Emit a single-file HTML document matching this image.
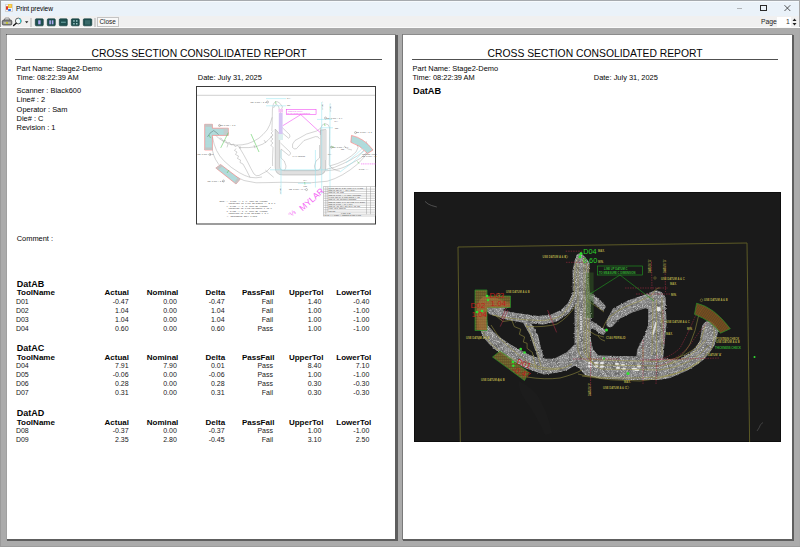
<!DOCTYPE html>
<html><head><meta charset="utf-8">
<style>
*{margin:0;padding:0;box-sizing:border-box}
html,body{width:800px;height:547px;overflow:hidden;background:#ababab;font-family:"Liberation Sans",sans-serif;position:relative}
.a{position:absolute;white-space:pre;line-height:1}
.t{position:absolute;white-space:pre;line-height:1}
svg.a{line-height:0}
</style></head><body>
<div class="a" style="left:0;top:0;width:800px;height:16px;background:#eaf2f9;border-top:1px solid #a6aaae"></div>
<div class="a" style="left:1px;top:1px;width:798px;height:1px;background:#f6fafd"></div>
<div class="a" style="left:0;top:16px;width:800px;height:12px;background:#f0f0f0"></div>
<div class="a" style="left:0;top:0;width:1px;height:547px;background:#9a9a9a"></div>
<div class="a" style="left:799px;top:0;width:1px;height:547px;background:#a8a8a8"></div>
<!-- title bar content -->
<div class="a" style="left:5px;top:4px;width:7.5px;height:7.5px;background:#f6f6f6;border:0.6px solid #d4d4d4"></div>
<div class="a" style="left:5.8px;top:6.2px;width:2.2px;height:3.6px;background:#d83828;border-radius:1px"></div>
<div class="a" style="left:8px;top:4.4px;width:3.9px;height:4.1px;background:radial-gradient(circle at 50% 45%,#ffe080,#e8a800);border-radius:0.8px"></div>
<div class="a" style="left:8.2px;top:9px;width:3px;height:1.8px;background:#3070e0;border-radius:0.8px"></div>
<div class="a" style="left:16px;top:6.1px;font-size:6.6px;color:#000;letter-spacing:-0.1px">Print preview</div>
<div class="a" style="left:736.5px;top:8px;width:5.5px;height:0.8px;background:#b0b4b8"></div>
<div class="a" style="left:760px;top:5px;width:6.5px;height:6px;border:0.8px solid #2a2a2a"></div>
<svg class="a" style="left:783px;top:4px" width="9" height="9" viewBox="0 0 9 9"><path d="M1.5 1.2L7.3 7M7.3 1.2L1.5 7" stroke="#222" stroke-width="0.75"/></svg>
<!-- toolbar -->
<div class="a" style="left:0;top:27px;width:800px;height:1px;background:#fbfbfb"></div>
<svg class="a" style="left:1px;top:17px" width="30" height="10" viewBox="0 0 30 10">
 <path d="M3.2 3.2 L4.2 1 H8 L9 3.2 Z" fill="#f4f4f4" stroke="#555" stroke-width="0.6"/>
 <path d="M1.3 4.2 Q1.5 3 3 3 H9.2 Q10.7 3 10.8 4.2 L10.8 7 Q10.7 8 9.5 8 H2.5 Q1.3 8 1.3 7 Z" fill="#8a8a8a" stroke="#3a3a3a" stroke-width="0.7"/>
 <rect x="2.6" y="5.4" width="7" height="1.1" fill="#d8d8c0"/>
 <rect x="5" y="5.3" width="2" height="1.3" fill="#c8c800"/>
 <circle cx="17.3" cy="4" r="2.9" fill="#f4fafa" stroke="#3a3a3a" stroke-width="0.8"/>
 <path d="M18.4 1.8 A2.4 2.4 0 0 1 19 5.6" stroke="#30d0d8" stroke-width="1.1" fill="none"/>
 <path d="M15.2 6.2 L12.6 8.6" stroke="#111" stroke-width="1.3" stroke-linecap="round"/>
 <path d="M24 4.3 h3.4 l-1.7 1.9 z" fill="#222"/>
</svg>
<div class="a" style="left:30px;top:18px;width:1.5px;height:9px;background:#cfcfcf"></div>
<div class="a" style="left:94px;top:18px;width:1.5px;height:9px;background:#cfcfcf"></div>
<svg class="a" style="left:34px;top:18px" width="60" height="9" viewBox="0 0 60 9">
 <g fill="#1f5050" stroke="#0d3535" stroke-width="0.6">
  <rect x="1.3" y="0.8" width="8" height="7" rx="1"/>
  <rect x="13.3" y="0.8" width="8" height="7" rx="1"/>
  <rect x="25.3" y="0.8" width="8" height="7" rx="1"/>
  <rect x="37.3" y="0.8" width="8" height="7" rx="1"/>
  <rect x="49.3" y="0.8" width="8.5" height="7" rx="1"/>
 </g>
 <rect x="4.2" y="2.3" width="2.4" height="4" fill="#b0a8f0"/>
 <rect x="15.3" y="2.3" width="1.6" height="4" fill="#b0a8f0"/>
 <rect x="17.8" y="2.3" width="1.6" height="4" fill="#b0a8f0"/>
 <rect x="27" y="3.6" width="4.8" height="1.4" fill="#5a9090"/>
 <rect x="39.2" y="2.2" width="1.5" height="1.5" fill="#a0c8c8"/><rect x="42" y="2.2" width="1.5" height="1.5" fill="#a0c8c8"/>
 <rect x="39.2" y="5" width="1.5" height="1.5" fill="#a0c8c8"/><rect x="42" y="5" width="1.5" height="1.5" fill="#a0c8c8"/>
 <rect x="51" y="2.2" width="5" height="4.4" fill="#3a6a6a"/>
</svg>
<div class="a" style="left:97px;top:17px;width:22px;height:10px;border:1px solid #c4c4c4;background:#f8f8f8"></div>
<div class="a" style="left:99.5px;top:19.3px;font-size:6.4px;color:#1a1a1a">Close</div>
<div class="a" style="left:761px;top:19px;font-size:6.8px;color:#222">Page</div>
<div class="a" style="left:777px;top:17px;width:14px;height:10px;background:#fff"></div>
<div class="a" style="left:786px;top:19px;font-size:6.8px;color:#333">1</div>
<svg class="a" style="left:791px;top:17px" width="7" height="10" viewBox="0 0 7 10"><path d="M1.5 4h4L3.5 1.5z M1.5 6h4L3.5 8.5z" fill="#222"/></svg>


<div class="a" style="left:6px;top:34px;width:390px;height:1px;background:#8c8c8c"></div>
<div class="a" style="left:6px;top:34px;width:1px;height:506px;background:#a0a0a0"></div>
<div class="a" style="left:6px;top:34px;width:1px;height:1px;background:#5a5a5a"></div>
<div class="a" style="left:395px;top:35px;width:3px;height:506px;background:#5e5e5e"></div>
<div class="a" style="left:7px;top:539px;width:391px;height:2px;background:#5e5e5e"></div>
<div class="a" style="left:7px;top:35px;width:388px;height:504px;background:#fff"></div>
<div class="a" style="left:402px;top:34px;width:391px;height:1px;background:#8c8c8c"></div>
<div class="a" style="left:402px;top:34px;width:1px;height:506px;background:#7a7a7a"></div>
<div class="a" style="left:0;top:546px;width:800px;height:1px;background:#9c9c9c"></div>
<div class="a" style="left:792px;top:35px;width:2px;height:506px;background:#5e5e5e"></div>
<div class="a" style="left:403px;top:539px;width:391px;height:2px;background:#5e5e5e"></div>
<div class="a" style="left:403px;top:35px;width:389px;height:504px;background:#fff"></div>
<div class="t" style="left:91.50px;top:49.24px;font-size:10.35px;color:#050505;">CROSS SECTION CONSOLIDATED REPORT</div>
<div class="a" style="left:15px;top:59px;width:367px;height:1px;background:#505050"></div>
<div class="t" style="left:16.60px;top:64.69px;font-size:7.45px;color:#050505;">Part Name: Stage2-Demo</div>
<div class="t" style="left:16.60px;top:73.59px;font-size:7.45px;color:#050505;">Time: 08:22:39 AM</div>
<div class="t" style="left:197.80px;top:73.89px;font-size:7.45px;color:#050505;">Date: July 31, 2025</div>
<div class="t" style="left:16.60px;top:87.29px;font-size:7.45px;color:#050505;">Scanner : Black600</div>
<div class="t" style="left:16.60px;top:96.44px;font-size:7.45px;color:#050505;">Line# : 2</div>
<div class="t" style="left:16.60px;top:105.59px;font-size:7.45px;color:#050505;">Operator : Sam</div>
<div class="t" style="left:16.60px;top:114.74px;font-size:7.45px;color:#050505;">Die# : C</div>
<div class="t" style="left:16.60px;top:123.89px;font-size:7.45px;color:#050505;">Revision : 1</div>
<div class="t" style="left:16.70px;top:234.59px;font-size:7.45px;color:#050505;">Comment :</div>
<div class="t" style="left:16.70px;top:279.58px;font-size:9.0px;font-weight:bold;color:#050505;">DatAB</div>
<div class="t" style="left:16.70px;top:289.39px;font-size:8.05px;font-weight:bold;color:#050505;">ToolName</div>
<div class="t" style="left:-71.00px;width:200px;text-align:right;top:289.43px;font-size:8.0px;font-weight:bold;color:#050505;">Actual</div>
<div class="t" style="left:-21.70px;width:200px;text-align:right;top:289.43px;font-size:8.0px;font-weight:bold;color:#050505;">Nominal</div>
<div class="t" style="left:25.10px;width:200px;text-align:right;top:289.43px;font-size:8.0px;font-weight:bold;color:#050505;">Delta</div>
<div class="t" style="left:74.40px;width:200px;text-align:right;top:289.43px;font-size:8.0px;font-weight:bold;color:#050505;">PassFail</div>
<div class="t" style="left:123.40px;width:200px;text-align:right;top:289.43px;font-size:8.0px;font-weight:bold;color:#050505;">UpperTol</div>
<div class="t" style="left:171.30px;width:200px;text-align:right;top:289.43px;font-size:8.0px;font-weight:bold;color:#050505;">LowerTol</div>
<div class="t" style="left:15.90px;top:298.07px;font-size:7.0px;color:#181818;">D01</div>
<div class="t" style="left:-71.40px;width:200px;text-align:right;top:298.07px;font-size:7.0px;color:#181818;">-0.47</div>
<div class="t" style="left:-23.20px;width:200px;text-align:right;top:298.07px;font-size:7.0px;color:#181818;">0.00</div>
<div class="t" style="left:24.60px;width:200px;text-align:right;top:298.07px;font-size:7.0px;color:#181818;">-0.47</div>
<div class="t" style="left:73.00px;width:200px;text-align:right;top:298.07px;font-size:7.0px;color:#181818;">Fail</div>
<div class="t" style="left:121.30px;width:200px;text-align:right;top:298.07px;font-size:7.0px;color:#181818;">1.40</div>
<div class="t" style="left:169.30px;width:200px;text-align:right;top:298.07px;font-size:7.0px;color:#181818;">-0.40</div>
<div class="t" style="left:15.90px;top:307.02px;font-size:7.0px;color:#181818;">D02</div>
<div class="t" style="left:-71.40px;width:200px;text-align:right;top:307.02px;font-size:7.0px;color:#181818;">1.04</div>
<div class="t" style="left:-23.20px;width:200px;text-align:right;top:307.02px;font-size:7.0px;color:#181818;">0.00</div>
<div class="t" style="left:24.60px;width:200px;text-align:right;top:307.02px;font-size:7.0px;color:#181818;">1.04</div>
<div class="t" style="left:73.00px;width:200px;text-align:right;top:307.02px;font-size:7.0px;color:#181818;">Fail</div>
<div class="t" style="left:121.30px;width:200px;text-align:right;top:307.02px;font-size:7.0px;color:#181818;">1.00</div>
<div class="t" style="left:169.30px;width:200px;text-align:right;top:307.02px;font-size:7.0px;color:#181818;">-1.00</div>
<div class="t" style="left:15.90px;top:315.97px;font-size:7.0px;color:#181818;">D03</div>
<div class="t" style="left:-71.40px;width:200px;text-align:right;top:315.97px;font-size:7.0px;color:#181818;">1.04</div>
<div class="t" style="left:-23.20px;width:200px;text-align:right;top:315.97px;font-size:7.0px;color:#181818;">0.00</div>
<div class="t" style="left:24.60px;width:200px;text-align:right;top:315.97px;font-size:7.0px;color:#181818;">1.04</div>
<div class="t" style="left:73.00px;width:200px;text-align:right;top:315.97px;font-size:7.0px;color:#181818;">Fail</div>
<div class="t" style="left:121.30px;width:200px;text-align:right;top:315.97px;font-size:7.0px;color:#181818;">1.00</div>
<div class="t" style="left:169.30px;width:200px;text-align:right;top:315.97px;font-size:7.0px;color:#181818;">-1.00</div>
<div class="t" style="left:15.90px;top:324.92px;font-size:7.0px;color:#181818;">D04</div>
<div class="t" style="left:-71.40px;width:200px;text-align:right;top:324.92px;font-size:7.0px;color:#181818;">0.60</div>
<div class="t" style="left:-23.20px;width:200px;text-align:right;top:324.92px;font-size:7.0px;color:#181818;">0.00</div>
<div class="t" style="left:24.60px;width:200px;text-align:right;top:324.92px;font-size:7.0px;color:#181818;">0.60</div>
<div class="t" style="left:73.00px;width:200px;text-align:right;top:324.92px;font-size:7.0px;color:#181818;">Pass</div>
<div class="t" style="left:121.30px;width:200px;text-align:right;top:324.92px;font-size:7.0px;color:#181818;">1.00</div>
<div class="t" style="left:169.30px;width:200px;text-align:right;top:324.92px;font-size:7.0px;color:#181818;">-1.00</div>
<div class="t" style="left:16.70px;top:343.78px;font-size:9.0px;font-weight:bold;color:#050505;">DatAC</div>
<div class="t" style="left:16.70px;top:353.59px;font-size:8.05px;font-weight:bold;color:#050505;">ToolName</div>
<div class="t" style="left:-71.00px;width:200px;text-align:right;top:353.63px;font-size:8.0px;font-weight:bold;color:#050505;">Actual</div>
<div class="t" style="left:-21.70px;width:200px;text-align:right;top:353.63px;font-size:8.0px;font-weight:bold;color:#050505;">Nominal</div>
<div class="t" style="left:25.10px;width:200px;text-align:right;top:353.63px;font-size:8.0px;font-weight:bold;color:#050505;">Delta</div>
<div class="t" style="left:74.40px;width:200px;text-align:right;top:353.63px;font-size:8.0px;font-weight:bold;color:#050505;">PassFail</div>
<div class="t" style="left:123.40px;width:200px;text-align:right;top:353.63px;font-size:8.0px;font-weight:bold;color:#050505;">UpperTol</div>
<div class="t" style="left:171.30px;width:200px;text-align:right;top:353.63px;font-size:8.0px;font-weight:bold;color:#050505;">LowerTol</div>
<div class="t" style="left:15.90px;top:362.27px;font-size:7.0px;color:#181818;">D04</div>
<div class="t" style="left:-71.40px;width:200px;text-align:right;top:362.27px;font-size:7.0px;color:#181818;">7.91</div>
<div class="t" style="left:-23.20px;width:200px;text-align:right;top:362.27px;font-size:7.0px;color:#181818;">7.90</div>
<div class="t" style="left:24.60px;width:200px;text-align:right;top:362.27px;font-size:7.0px;color:#181818;">0.01</div>
<div class="t" style="left:73.00px;width:200px;text-align:right;top:362.27px;font-size:7.0px;color:#181818;">Pass</div>
<div class="t" style="left:121.30px;width:200px;text-align:right;top:362.27px;font-size:7.0px;color:#181818;">8.40</div>
<div class="t" style="left:169.30px;width:200px;text-align:right;top:362.27px;font-size:7.0px;color:#181818;">7.10</div>
<div class="t" style="left:15.90px;top:371.22px;font-size:7.0px;color:#181818;">D05</div>
<div class="t" style="left:-71.40px;width:200px;text-align:right;top:371.22px;font-size:7.0px;color:#181818;">-0.06</div>
<div class="t" style="left:-23.20px;width:200px;text-align:right;top:371.22px;font-size:7.0px;color:#181818;">0.00</div>
<div class="t" style="left:24.60px;width:200px;text-align:right;top:371.22px;font-size:7.0px;color:#181818;">-0.06</div>
<div class="t" style="left:73.00px;width:200px;text-align:right;top:371.22px;font-size:7.0px;color:#181818;">Pass</div>
<div class="t" style="left:121.30px;width:200px;text-align:right;top:371.22px;font-size:7.0px;color:#181818;">1.00</div>
<div class="t" style="left:169.30px;width:200px;text-align:right;top:371.22px;font-size:7.0px;color:#181818;">-1.00</div>
<div class="t" style="left:15.90px;top:380.17px;font-size:7.0px;color:#181818;">D06</div>
<div class="t" style="left:-71.40px;width:200px;text-align:right;top:380.17px;font-size:7.0px;color:#181818;">0.28</div>
<div class="t" style="left:-23.20px;width:200px;text-align:right;top:380.17px;font-size:7.0px;color:#181818;">0.00</div>
<div class="t" style="left:24.60px;width:200px;text-align:right;top:380.17px;font-size:7.0px;color:#181818;">0.28</div>
<div class="t" style="left:73.00px;width:200px;text-align:right;top:380.17px;font-size:7.0px;color:#181818;">Pass</div>
<div class="t" style="left:121.30px;width:200px;text-align:right;top:380.17px;font-size:7.0px;color:#181818;">0.30</div>
<div class="t" style="left:169.30px;width:200px;text-align:right;top:380.17px;font-size:7.0px;color:#181818;">-0.30</div>
<div class="t" style="left:15.90px;top:389.12px;font-size:7.0px;color:#181818;">D07</div>
<div class="t" style="left:-71.40px;width:200px;text-align:right;top:389.12px;font-size:7.0px;color:#181818;">0.31</div>
<div class="t" style="left:-23.20px;width:200px;text-align:right;top:389.12px;font-size:7.0px;color:#181818;">0.00</div>
<div class="t" style="left:24.60px;width:200px;text-align:right;top:389.12px;font-size:7.0px;color:#181818;">0.31</div>
<div class="t" style="left:73.00px;width:200px;text-align:right;top:389.12px;font-size:7.0px;color:#181818;">Fail</div>
<div class="t" style="left:121.30px;width:200px;text-align:right;top:389.12px;font-size:7.0px;color:#181818;">0.30</div>
<div class="t" style="left:169.30px;width:200px;text-align:right;top:389.12px;font-size:7.0px;color:#181818;">-0.30</div>
<div class="t" style="left:16.70px;top:408.98px;font-size:9.0px;font-weight:bold;color:#050505;">DatAD</div>
<div class="t" style="left:16.70px;top:418.79px;font-size:8.05px;font-weight:bold;color:#050505;">ToolName</div>
<div class="t" style="left:-71.00px;width:200px;text-align:right;top:418.83px;font-size:8.0px;font-weight:bold;color:#050505;">Actual</div>
<div class="t" style="left:-21.70px;width:200px;text-align:right;top:418.83px;font-size:8.0px;font-weight:bold;color:#050505;">Nominal</div>
<div class="t" style="left:25.10px;width:200px;text-align:right;top:418.83px;font-size:8.0px;font-weight:bold;color:#050505;">Delta</div>
<div class="t" style="left:74.40px;width:200px;text-align:right;top:418.83px;font-size:8.0px;font-weight:bold;color:#050505;">PassFail</div>
<div class="t" style="left:123.40px;width:200px;text-align:right;top:418.83px;font-size:8.0px;font-weight:bold;color:#050505;">UpperTol</div>
<div class="t" style="left:171.30px;width:200px;text-align:right;top:418.83px;font-size:8.0px;font-weight:bold;color:#050505;">LowerTol</div>
<div class="t" style="left:15.90px;top:427.47px;font-size:7.0px;color:#181818;">D08</div>
<div class="t" style="left:-71.40px;width:200px;text-align:right;top:427.47px;font-size:7.0px;color:#181818;">-0.37</div>
<div class="t" style="left:-23.20px;width:200px;text-align:right;top:427.47px;font-size:7.0px;color:#181818;">0.00</div>
<div class="t" style="left:24.60px;width:200px;text-align:right;top:427.47px;font-size:7.0px;color:#181818;">-0.37</div>
<div class="t" style="left:73.00px;width:200px;text-align:right;top:427.47px;font-size:7.0px;color:#181818;">Pass</div>
<div class="t" style="left:121.30px;width:200px;text-align:right;top:427.47px;font-size:7.0px;color:#181818;">1.00</div>
<div class="t" style="left:169.30px;width:200px;text-align:right;top:427.47px;font-size:7.0px;color:#181818;">-1.00</div>
<div class="t" style="left:15.90px;top:436.42px;font-size:7.0px;color:#181818;">D09</div>
<div class="t" style="left:-71.40px;width:200px;text-align:right;top:436.42px;font-size:7.0px;color:#181818;">2.35</div>
<div class="t" style="left:-23.20px;width:200px;text-align:right;top:436.42px;font-size:7.0px;color:#181818;">2.80</div>
<div class="t" style="left:24.60px;width:200px;text-align:right;top:436.42px;font-size:7.0px;color:#181818;">-0.45</div>
<div class="t" style="left:73.00px;width:200px;text-align:right;top:436.42px;font-size:7.0px;color:#181818;">Fail</div>
<div class="t" style="left:121.30px;width:200px;text-align:right;top:436.42px;font-size:7.0px;color:#181818;">3.10</div>
<div class="t" style="left:169.30px;width:200px;text-align:right;top:436.42px;font-size:7.0px;color:#181818;">2.50</div>

<div class="t" style="left:487.50px;top:49.24px;font-size:10.35px;color:#050505;">CROSS SECTION CONSOLIDATED REPORT</div>
<div class="a" style="left:412px;top:59px;width:366px;height:1px;background:#505050"></div>
<div class="t" style="left:412.60px;top:64.69px;font-size:7.45px;color:#050505;">Part Name: Stage2-Demo</div>
<div class="t" style="left:412.60px;top:73.59px;font-size:7.45px;color:#050505;">Time: 08:22:39 AM</div>
<div class="t" style="left:593.80px;top:73.89px;font-size:7.45px;color:#050505;">Date: July 31, 2025</div>
<div class="t" style="left:413.00px;top:87.41px;font-size:9.2px;font-weight:bold;color:#050505;">DatAB</div>

<svg class="a" style="left:196px;top:85px" width="181" height="141" viewBox="196 85 181 141">
<defs>
<pattern id="hatT" width="1.5" height="1.5" patternUnits="userSpaceOnUse">
 <rect width="1.5" height="1.5" fill="#9ed0d0"/>
 <path d="M0 0.75H1.5" stroke="#d8f0f0" stroke-width="0.5"/>
</pattern>
</defs>
<rect x="196.5" y="86.5" width="179" height="137.5" fill="#fff" stroke="#3a3a3a" stroke-width="1"/>
<path d="M197 95.3 H375" stroke="#c4c4c4" stroke-width="0.8"/>
<!-- U channel gray fill -->
<path d="M275.2 129 L275.2 167 Q275.2 175 283 175 L318 175 Q325.8 175 325.8 167 L325.8 129.6 L320.7 130 L320.7 166 Q320.7 170.6 316 170.6 L284 170.6 Q279.7 170.6 279.7 166 L279.7 134 Z" fill="#e0e0e0" stroke="#9a9a9a" stroke-width="0.45"/>
<path d="M324 130 L326.5 130 L326.5 160 L324 160 Z" fill="#e0e0e0"/>
<g fill="none" stroke="#989898" stroke-width="0.42">
 <!-- stem outer & tip -->
 <path d="M271.8 131 L272.1 125.7 L272.4 110 Q272.8 103 275.5 101.6 Q279 101 282.5 106.9 L280.5 111.5 L280 125.7"/>
 <path d="M273.5 108 Q275 104 277 104.5 Q279 106 279.5 110"/>
 <!-- fingers -->
 <path d="M280 125.5 L289.5 134.5 Q291 137.5 288.5 138.2 L280 131"/>
 <path d="M280.5 143 L290 152 Q291.5 155 288.5 155.2 L281 149"/>
 <!-- hook arm + post -->
 <path d="M320.3 135 L320.7 128 L317 130.9 L306.6 134 L295 140.5 Q291.5 144 292.5 147.5 Q294 149.5 296.3 148.8 L304 140.5 L315.5 136.6 Q318.5 136 319.6 138.9"/>
 <path d="M320.7 128 Q322 123.8 325.1 123.6 Q329 124 329.6 127.7 L329.3 164.8 Q332 170 340 171.2"/>
 <!-- U interior with ears -->
 <path d="M281 149.4 L281 158 Q285 160 286 166 Q286 168.5 284.5 170.3"/>
 <path d="M319.5 145 L319.5 158 Q315 160 314.5 166 Q314.5 168.5 316 170.3"/>
 <!-- arm (upper) double lines -->
 <path d="M272.1 117.3 Q270 126 267.2 129.8 Q263 135 258.9 138.2 Q253 142 247.8 143.7 Q242 145.2 236.7 145.1 Q232 145 228.3 143.7 Q222 141 218.6 138.2 Q215 135 213 131.2"/>
 
 <path d="M264 140 L266 143 M254 145 L255 148.2 M240 146 L240 148.8 M228 144 L227 147.4"/>
 <!-- teeth on stem left -->
 <path d="M273.3 131 L271 133 L273 135 L270.7 137 L273 139 L270.7 141 L273 143 L270.7 145 L273 147.5 L272.5 160 L272.6 166"/>
 <!-- left outer band -->
 <path d="M212.4 150 Q214 160 222 168 Q232 176 244 180.5 Q256 184 268 182.6 Q282 182 295 182.5 Q312 183.5 327.2 181.25 Q342.5 177 357.8 163.9 Q366 156 371 148"/>
 
 
 <!-- teeth band inner -->
 
 
 
 <path d="M272.5 135.7 Q268 141 263 144 Q256 147.5 248.75 147.6 L239.2 147.6 L237.5 145.5 L235 146.5 L233.5 144 L231 145 L229.5 142.5 L227 143 L225.5 140.5 L223 141 L221.5 138.5 L219.6 138"/>
 <path d="M236 148.5 L234.5 150.5 L237 152 L235.5 154.5 L238.5 156 L237.5 158.5 L240.5 160 L240 162.5 L243 164 Q247 171 250 177.3"/>
 <path d="M239.5 147.6 Q244 155 247.6 161.9 Q251 169 254 174 Q256 176.5 259 175.5 Q264 172.5 266.6 171.4 L271 167"/>
 <path d="M212.5 137 Q215 152 223.8 160.7 Q231 168 239.2 172.6 Q245 176 250 177.3"/>
 <path d="M265.4 170.2 L273.7 177.3"/>
 <path d="M250 177.3 Q256 178.5 262 177"/>
 <!-- right arc bands -->
 <path d="M325.8 169.4 Q335 168 342.5 163.9 Q351 160 357.8 155.6 Q363 152 366 148 Q368 144 366 141"/>
 <path d="M329.5 166 Q338 164 345.3 160 Q352 156 356 152 Q359.5 147.5 357 143.5"/>
 <path d="M325.8 170.8 Q338 170 345.3 166.7 Q354 162 360.5 158.3 Q366 154 368.9 150"/>
 <path d="M344 146 Q348 150 352 150"/>
</g>
<!-- purple / magenta on stem -->
<rect x="278.8" y="113" width="3.8" height="21" fill="#d4c4f4"/>
<rect x="278.5" y="109" width="4.5" height="3.5" fill="#f4c4f4"/>
<rect x="278.5" y="134" width="4.5" height="6" fill="#dcefef"/>
<!-- teal hatched boxes -->
<g stroke="#ff6a6a" stroke-width="0.55" fill="url(#hatT)">
 <path d="M204.7 124.3 H212.4 V128.2 H228.3 V135.4 H212.4 V150 H204.7 Z"/>
 <path d="M215.8 168 L220.7 164.6 L240.1 179.2 L236 184 Z"/>
 <path d="M351.5 135.4 Q364 138 373 150 L367.5 153.5 Q360 145 350.8 142.3 Z"/>
</g>
<g fill="#c4c4c4">
 <rect x="204.7" y="124.3" width="7.7" height="2.5"/>
 <rect x="204.7" y="147.5" width="7.7" height="2.5"/>
 <path d="M215.8 168 L220.7 164.6 L222.8 166.2 L218 169.6 Z"/>
 <path d="M236 184 L240.1 179.2 L238 177.6 L234 182.4 Z"/>
</g>
<path d="M207.5 136.9 Q210 132 213.7 130.6 Q216 132 218.6 134.6" fill="none" stroke="#405050" stroke-width="0.4"/>
<rect x="223.6" y="128.2" width="4.7" height="7.1" fill="#c8c8c8" opacity="0.7"/>
<!-- green marks -->
<g stroke="#50c850" stroke-width="0.55" fill="none">
 <path d="M220.7 147.9 L228.3 132.6"/>
 <path d="M251 134 L259 152"/>
 <path d="M209 135 L210.5 138"/>
 <path d="M275.5 101.5 L276 104"/>
 <path d="M324.5 123.6 L325 126"/>
 <path d="M227 173 L229 170"/>
 <path d="M304.7 182 L304.9 184.5"/>
 <path d="M357.5 161.5 L359 163.5"/>
 <path d="M331 147 L334 147"/>
</g>
<!-- cyan dimension lines -->
<g stroke="#90e4f0" stroke-width="0.5" fill="none">
 <path d="M266 98.6 H286 M266 105.8 H286"/>
 <path d="M321.7 102 V194 M330 103.5 V190"/>
 <path d="M317 119.4 H332 M321 127.75 H333"/>
 <path d="M281 150 V194.4"/>
 <path d="M270 169.8 H328"/>
 <path d="M315.4 150 V187.5"/>
 <path d="M340 172 Q354 163 364 151"/>
 <path d="M346 163 Q357 154 367 144"/>
 <path d="M298 183.3 H311"/>
</g>
<!-- magenta -->
<g stroke="#f040f0" fill="none" stroke-width="0.55">
 <rect x="286.25" y="109.7" width="29.8" height="4.9"/>
 <path d="M300.8 114.6 L282.8 125.7 M300.8 114.6 L320.3 132.6"/>
 <path d="M361 163.9 L376 163.9" stroke-dasharray="1.2 0.6"/>
</g>
<g font-family="Liberation Sans" fill="#f464f4">
 <text x="302.6" y="211.6" font-size="8.6" transform="rotate(-42 302.6 211.6)">MYLAR</text>
 <text x="291" y="217.5" font-size="6.8" transform="rotate(-42 291 217.5)">'⅓</text>
</g>
<g font-family="Liberation Sans" fill="#f050f0" font-size="1.7">
 <text x="288" y="112">LINE UP DATUM C</text>
 <text x="287" y="114">TO MEASURE C DIMENSION</text>
</g>
<!-- small labels -->
<g font-family="Liberation Mono" fill="#5a5a5a" font-size="1.75">
 <text x="250.5" y="102.6">USE DATUM A &amp; B</text>
 <text x="219.6" y="126">USE DATUM A &amp; B</text>
 <text x="197.5" y="155">USE DATUM A &amp; B</text>
 <text x="207.5" y="181.8">USE DATUM A &amp; B</text>
 <text x="326.5" y="118.6">USE DATUM A &amp; C</text>
 <text x="356" y="133.2">USE DATUM A &amp; B</text>
 <text x="332.5" y="147.8">USE DATUM A &amp; C</text>
 <text x="289" y="190.2">USE DATUM A &amp; C</text>
 <text x="292.5" y="156.8">C146 PERSLID</text>
 <text x="287" y="99.2">MAX.</text>
 <text x="287" y="106.4">MIN.</text>
 <text x="334.5" y="121.8">MAX.</text>
 <text x="335" y="129">MIN.</text>
 <text x="328" y="155.4">MAX.</text>
 <text x="303.4" y="181">MAX.</text>
 <text x="303.6" y="186.8">MIN.</text>
 <text x="359" y="170">DATUM 'A'</text>
 <text x="341" y="150">MIN.</text>
 <text x="362" y="155">POSITION CHECK</text>
 <text x="362" y="157">USE DATUM A &amp; B</text>
 <text x="219.4" y="202" font-size="2.1" fill="#4a4a4a" textLength="48.1" lengthAdjust="spacingAndGlyphs">NOTE: 1. DATUM 'A' &amp; 'C' MUST BE ALIGNED</text>
 <text x="228.6" y="204.4" font-size="2.1" fill="#4a4a4a" textLength="46.8" lengthAdjust="spacingAndGlyphs">TOGETHER TO TAKE READINGS A, B &amp; C</text>
 <text x="226.4" y="207" font-size="2.1" fill="#4a4a4a" textLength="41.1" lengthAdjust="spacingAndGlyphs">2. DATUM 'A' &amp; 'B' MUST BE ALIGNED</text>
 <text x="228.6" y="209.4" font-size="2.1" fill="#4a4a4a" textLength="43.3" lengthAdjust="spacingAndGlyphs">TOGETHER TO TAKE READINGS C TO G</text>
 <text x="226.4" y="212" font-size="2.1" fill="#4a4a4a" textLength="41.1" lengthAdjust="spacingAndGlyphs">3. DATUM 'A' &amp; 'D' MUST BE ALIGNED</text>
 <text x="228.6" y="214.4" font-size="2.1" fill="#4a4a4a" textLength="39.8" lengthAdjust="spacingAndGlyphs">TOGETHER TO TAKE READING F &amp; H</text>
 <text x="226.4" y="216.9" font-size="2.1" fill="#4a4a4a" textLength="30.6" lengthAdjust="spacingAndGlyphs">4. REFERENCE ONLY GAUGE</text>
</g>
<g fill="none" stroke="#5a5a5a" stroke-width="0.35">
 <circle cx="267.5" cy="102" r="1"/>
 <circle cx="219.5" cy="125.5" r="1"/>
 <circle cx="210" cy="154.5" r="1"/>
 <circle cx="223.5" cy="181" r="1"/>
 <circle cx="325.5" cy="118" r="1"/>
 <circle cx="355.5" cy="132.6" r="1"/>
 <circle cx="331.4" cy="147.2" r="1"/>
 <circle cx="306.5" cy="189.6" r="1"/>
</g>
<g font-family="Liberation Mono" fill="#5a5a5a" font-size="1.75">
 <text transform="translate(280.5 194) rotate(-90)">DATUM 'F'</text>
 <text transform="translate(322.5 110) rotate(-90)">DATUM 'D'</text>
 <text transform="translate(331.2 112) rotate(-90)">DATUM 'D'</text>
</g>
<!-- table -->
<g stroke="#8a8a8a" stroke-width="0.4" fill="none">
 <rect x="323.75" y="186.8" width="52" height="29.2"/>
 <path d="M323.75 189.1H375.7 M323.75 191.4H375.7 M323.75 193.7H375.7 M323.75 196H375.7 M323.75 198.3H375.7 M323.75 200.6H375.7 M323.75 202.9H375.7 M323.75 205.2H375.7 M323.75 207.5H375.7 M323.75 209.8H375.7 M323.75 212.1H375.7 M323.75 214.2H375.7"/>
 <path d="M325.8 186.8V214.2 M327.8 186.8V212.1 M366.5 186.8V214.2 M370.5 186.8V214.2"/>
</g>
<g font-family="Liberation Mono" fill="#454545" font-size="1.6">
 <text x="328.5" y="188.7">CHANGE DETAIL B ON GAUGE C146 FLANGE</text>
 <text x="328.5" y="191">REDRAWN DETAIL A AND C  READY</text>
 <text x="328.5" y="193.3">REDRAWN ADD SIZE</text>
 <text x="328.5" y="195.6">REDRAWN DATUM A AS CHECK THICKNESS</text>
 <text x="328.5" y="197.9">CHANGE DETAIL B SIZE  REMOVE F TOL</text>
 <text x="328.5" y="200.2">REDRAWN ADD READINGS REQUIRED</text>
 <text x="328.5" y="202.5">REDRAWN CHECK C146 TO GAUGE WALL BLOCK</text>
 <text x="328.5" y="204.8">REDRAWN DATUM A  TO C TOLS</text>
 <text x="328.5" y="207.1">REDRAWN ADD REAL BUT READ ADD DIM</text>
 <text x="328.5" y="209.4">CHECK READ  REDRAWN</text>
 <text x="328.5" y="211.7">CREATED</text>
 <text x="341" y="213.8">GAUGE NAME</text>
 <text x="324.5" y="215.7">SCALE 1:1     SHEET    1 TORRENCE BAUER GAUGE</text>
</g>
</svg>

<svg class="a" style="left:414px;top:192px" width="367" height="250" viewBox="414 192 367 250">
<defs>
<filter id="nz" x="0" y="0" width="100%" height="100%">
 <feTurbulence type="fractalNoise" baseFrequency="0.6" numOctaves="2" seed="11" result="dn"/>
 <feDisplacementMap in="SourceGraphic" in2="dn" scale="2.2" xChannelSelector="R" yChannelSelector="G" result="disp"/>
 <feTurbulence type="fractalNoise" baseFrequency="0.8" numOctaves="2" seed="5" result="n"/>
 <feColorMatrix in="n" type="matrix" values="0 0 0 0 0.8  0 0 0 0 0.8  0 0 0 0 0.8  0 0 0 1.9 -0.92" result="m"/>
 <feGaussianBlur in="m" stdDeviation="0.42" result="mb"/>
 <feTurbulence type="fractalNoise" baseFrequency="0.25" numOctaves="1" seed="9" result="n2"/>
 <feColorMatrix in="n2" type="matrix" values="0 0 0 0 0.05  0 0 0 0 0.05  0 0 0 0 0.05  0 0 0 1.6 -0.55" result="m2"/>
 <feComposite in="mb" in2="disp" operator="in" result="c"/>
 <feComposite in="m2" in2="disp" operator="in" result="c2"/>
 <feMerge><feMergeNode in="disp"/><feMergeNode in="c2"/><feMergeNode in="c"/></feMerge>
</filter>
<pattern id="hat" width="2" height="1.6" patternUnits="userSpaceOnUse">
 <rect width="2" height="1.6" fill="#665e2a"/>
 <path d="M0 0.4H2" stroke="#9a9040" stroke-width="0.5"/>
 <path d="M0.5 0V1.6" stroke="#7a4a24" stroke-width="0.35"/>
</pattern>
<pattern id="hat2" width="2" height="2" patternUnits="userSpaceOnUse" patternTransform="rotate(35)">
 <rect width="2" height="2" fill="#5e4a22"/>
 <path d="M0.5 0V2" stroke="#b04a1c" stroke-width="0.5"/>
 <path d="M0 1.2H2" stroke="#8a6a28" stroke-width="0.4"/>
</pattern>
</defs>
<rect x="414" y="192" width="367" height="250" fill="#1a1a1a"/>
<rect x="414.5" y="192.5" width="366" height="249" fill="none" stroke="#0e0e0e" stroke-width="1"/>
<path d="M425 201.4 Q428 204.5 431.5 205.5 L436.8 207" stroke="#707070" stroke-width="0.6" fill="none"/>
<path d="M757 431 L759 428 Q760 424 763 422.5" stroke="#5a5a5a" stroke-width="0.6" fill="none"/>
<path d="M519 381 Q530 386 538 396 Q548 412 552 433 L545 435 Q536 415 525 400 Q518 390 519 381Z" fill="#1c1c1c" />
<path d="M460.3 442 L458 247 L747 243 L749.6 442" fill="none" stroke="#5c5a26" stroke-width="1"/>

<g filter="url(#nz)">
<g fill="#8e8e8e">
 <!-- stem -->
 <path d="M575.5 257 Q577 253 580 253.5 Q584 254 589.6 263 L588.5 275 L589.5 290 L590.6 300 L591 340 Q592 350 598 355 L574 358 L574.6 345 L574.6 300 L572.7 290 L572.7 270 Z"/>
 <!-- upper arm -->
 <path d="M486 309 L497 309 L516 313 L538 316 L550 315 L561 310 L568 303 L573 292 L576 302 L569 313 L557 321.5 L543 324.5 L525 323 L506 319.5 L489 314 Z"/>
 <!-- corner + outer band -->
 <path d="M486.5 312 L487.4 325 L493.8 332.3 L502 338.7 L511.2 345.1 L521.2 350.6 L530 355.2 L541.2 358.7 L554 358.7 L566.8 352.3 L574 345 L578 352 L574 366 L566.8 370.2 L556.6 372.7 L543.8 374.5 L524.9 368 L509.3 358.9 L497.4 351.5 L491 346 L484.6 338.7 L480 330.5 L477 310 Q477.5 299 484 296.5 L497 298 L510 307 L497 312 Z"/>
 <!-- diagonal -->
 <path d="M523 322.5 L530 335 L534.5 348.4 L539 361.2 L545.5 361.2 L541 348.4 L538 335 L530.5 322 Z"/>
 <!-- bottom band -->
 <path d="M566 371 L574 345 Q585 355 598 355.5 L636.5 356.5 L661.4 358.5 L678.3 359.5 Q689 354 692.9 350.3 Q699 343 700.2 339.4 L702 326.6 Q704 321 709 321 Q714 321 718.5 330.2 L714.8 344.8 Q710 353 703.9 359.5 Q696 366 687.4 370.4 L670 378 L658 380 L630 380 L600 378.5 L585 375 L579 368 L572 365 Z"/>
 <!-- post -->
 <path d="M648.2 309 L649.7 295 Q652 290 657 290.5 Q664 292 665.5 298 L666.5 323.9 L663 359 L636.5 359 L637 350 Q641 341.4 645 335 L648.2 325 Z"/>
 <!-- hook arm -->
 <path d="M606.8 320 L613 308.5 L628 300.6 L643 295.2 L651.2 292 L657 291 L650 309 L645.3 308.3 L632.2 312.6 L620 318.5 L612 326.8 Q608 328.5 606.5 325 Z"/>
</g>
<g fill="none" stroke="#8e8e8e" stroke-linecap="round">
 <path d="M591 296 L602.5 307" stroke-width="6"/>
 <path d="M591 324 L602.5 331.5" stroke-width="6"/>
</g>
</g>
<!-- white blobs -->
<g fill="#e6e6e6">
 <ellipse cx="590" cy="363" rx="2" ry="1.2"/><ellipse cx="596" cy="363" rx="2" ry="1.2"/><ellipse cx="602" cy="363" rx="2" ry="1.2"/>
 <ellipse cx="590" cy="366.5" rx="2" ry="1.2"/><ellipse cx="596" cy="366.5" rx="2" ry="1.2"/><ellipse cx="602" cy="366.5" rx="2" ry="1.2"/>
 <ellipse cx="617" cy="364" rx="2" ry="1.3"/><ellipse cx="623" cy="365" rx="2" ry="1.3"/><ellipse cx="618" cy="368" rx="2" ry="1.3"/><ellipse cx="624" cy="369" rx="2" ry="1.3"/>
 <ellipse cx="634" cy="369" rx="2.5" ry="1.5"/><ellipse cx="639" cy="366" rx="2" ry="1.5"/><ellipse cx="637" cy="370" rx="2.5" ry="1.3"/>
 <ellipse cx="658.5" cy="309" rx="2.2" ry="2.2"/>
 <path d="M653 334 L656 323" stroke="#d8d8d8" stroke-width="2" stroke-linecap="round"/>
 <path d="M581 311 L581 330" stroke="#dcdcdc" stroke-width="1.6" stroke-dasharray="1.5 1"/>
</g>
<!-- CAD yellow overlay -->
<g fill="none" stroke="#9c9440" stroke-width="0.55">
 <path d="M492 315 Q515 320 541 320.5 Q556 320 563 314 Q570 306 574 296 L575 268 Q576 259 581 257"/>
 <path d="M495 315 L502.8 321.5 L511.8 320.2 L514.3 326.6 L520.7 329.2 L519.4 334.3 L524.6 336.9 L523.3 342 L527.1 343.3 L527.1 348.4 L532.3 352.3 L536.1 368.9"/>
 <path d="M526 324 Q534 340 541 366"/>
 <path d="M526 326.5 Q545 327.5 557 324 Q569 317 576.5 304"/>
 <path d="M482 330 Q487 342 500 351.5 Q515 362 540 369 Q560 372 572 364"/>
 <path d="M491 325 Q496 333 500.2 338.7 Q506 344 511.2 348.8 Q520 356 529.5 363.4 Q545 370 560 368"/>
 <path d="M578 264 L578 350 Q580 360 592 362"/>
 <path d="M584 258 L584 352 Q586 360 600 360 L660 361.5 Q688 358 700 343 L705 326"/>
 <path d="M586.5 262 L586.5 352 Q588 364 600 365 L660 366 Q690 362 706 340"/>
 <path d="M589 265 L589 352 Q590 367 602 369 L660 370 Q692 366 709 345"/>
 <path d="M578 374 Q600 380 660 377 Q695 372 712 348 Q716 334 713 324"/>
 <path d="M603 328 Q607 315 625 307 Q645 299 652 295 Q656 287 660 288"/>
 <path d="M662 297 L662 355"/>
 <path d="M656.5 300 L656.5 355"/>
 <path d="M653 297 L652 355"/>
 <path d="M643 347 L643 358"/>
 <path d="M527 377 Q545 380 560 378 Q575 374 582 370"/>
 <path d="M605 341 Q600 340 598 336"/>
 <path d="M582 376 Q610 381 640 381 Q675 378 700 362"/>
 <path d="M669 364 Q683 357 690 344 Q696 330 698 318 Q700 309 704 307"/>
 <path d="M586 300 Q595 305 604 312"/>
 <path d="M587 330 Q595 336 604 337"/>
</g>
<!-- red dashed dim lines -->
<g fill="none" stroke="#a02a40" stroke-width="0.6">
 <path d="M507.9 310 L500.2 326.6"/>
 <path d="M547.6 310 L556.6 332.4"/>
 <path d="M509 301 L501 320"/>
</g>
<g fill="none" stroke="#a02a40" stroke-width="0.6" stroke-dasharray="1.5 1">
 <path d="M565.7 251.2 L583 251.2"/>
 <path d="M566 262.3 L588 262.3"/>
 <path d="M590.6 342 L590.6 396"/>
 <path d="M643 340 L643 384"/>
 <path d="M657 355 L656 384"/>
 <path d="M573 359 L620 359"/>
 <path d="M640 360 L720 358"/>
 <path d="M625 288 L668 288"/>
 <path d="M636 294 L672 294"/>
 <path d="M712 318 Q700 330 690 345 Q675 362 655 367"/>
 <path d="M699 307 Q690 330 680 348 Q668 360 650 360"/>
 <path d="M651.5 262 L652 290"/>
 <path d="M665 266 L665.5 292"/>
 <path d="M663 310 L664 345"/>
</g>
<!-- hatched boxes -->
<g stroke="#28a028" stroke-width="0.7" fill="url(#hat)" opacity="0.9">
 <path d="M475 290 L487 290 L487 296 L510.5 296 L510.5 307.5 L487 307.5 L487 330.5 L475 330.5 Z"/>
 <path d="M492.5 357 L500 351 L529 372.5 L524.5 380.5 Z"/>
 <path d="M696.6 303.2 Q714 307 730.3 328.7 L720.4 333.2 Q712 321 694.5 314.3 Z" fill="url(#hat2)"/>
 <path d="M585.8 272.5 L593.6 272.5 L593.6 318 L585.8 318 Z" fill="#3a6a28" stroke="none" opacity="0.45"/>
</g>
<path d="M477 330 L477 310 Q477.5 299 484 296.5 L497 298 L510 303 L510 307 L497 308 L488 307.5 Q485 312 487 330 Z" fill="#b86a38" opacity="0.45"/>
<!-- green boxes / lines -->
<g fill="none" stroke="#20a020" stroke-width="0.6">
 <rect x="597.5" y="266" width="45" height="9"/>
 <path d="M620 275 L590 294"/>
 <path d="M620 275 L654 301"/>
</g>
<g fill="#30e030">
 <circle cx="581" cy="253.5" r="1.5"/><circle cx="580" cy="256.8" r="1.5"/>
 <circle cx="487" cy="296" r="1.3"/><circle cx="488" cy="300" r="1.3"/>
 <circle cx="477" cy="312" r="1.3"/><circle cx="482" cy="311" r="1.3"/>
 <circle cx="520.7" cy="349" r="1.3"/><circle cx="524.6" cy="352.5" r="1.3"/>
 <circle cx="512.9" cy="362" r="1.3"/><circle cx="513.3" cy="365.7" r="1.3"/>
 <circle cx="606.5" cy="330" r="1.5"/>
 <circle cx="628" cy="373.5" r="1.6"/>
 <circle cx="754.5" cy="357" r="1"/>
 <circle cx="604" cy="358.5" r="1"/>
</g>
<g font-family="Liberation Sans" fill="#2ad22a">
 <text x="583.2" y="253.6" font-size="7.3">D04</text>
 <text x="583" y="262.7" font-size="7.3">0.60</text>
</g>
<g font-family="Liberation Sans" fill="#c01c1c">
 <text x="489.5" y="297.6" font-size="8">D03</text>
 <text x="490.5" y="305.8" font-size="8">1.04</text>
 <text x="470.5" y="307.6" font-size="8">D02</text>
 <text x="471.5" y="316.5" font-size="8">1.04</text>
 <text x="516" y="363.5" font-size="8" transform="rotate(22 516 363.5)">D01</text>
 <text x="512" y="371.5" font-size="8" transform="rotate(22 512 371.5)">-0.47</text>
</g>
<g font-family="Liberation Sans" fill="#b0a848" font-size="2.7" font-weight="bold" letter-spacing="0">
 <text x="542.5" y="257.8">USE DATUM A &amp; B</text>
 <text x="506" y="293.2">USE DATUM A &amp; B</text>
 <text x="466" y="339">USE DATUM A &amp; B</text>
 <text x="481" y="381">USE DATUM A &amp; B</text>
 <text x="661" y="280">USE DATUM A &amp; C</text>
 <text x="704" y="301.2">USE DATUM A &amp; B</text>
 <text x="666" y="323">USE DATUM A &amp; C</text>
 <text x="603" y="388.5">USE DATUM A &amp; C</text>
 <text x="606" y="338.8" font-size="2.8">C146 PERSLID</text>
 <text x="716" y="340">POSITION CHECK</text>
 <text x="716" y="343">USE DATUM A &amp; B</text>
 <text x="715" y="349" fill="#30b030">THICKNESS CHECK</text>
 <text x="708" y="356">DATUM 'A'</text>
 <text x="670" y="285">MAX.</text>
 <text x="671" y="295.5">MIN.</text>
 <text x="687" y="330">MIN.</text>
 <text x="666" y="335">MAX.</text>
 <text x="624" y="383">MAX.</text>
 <text x="598" y="251.5">MAX.</text>
 <text x="598" y="263">MIN.</text>
 <text x="604" y="269.5" fill="#30b030">LINE UP DATUM C</text>
 <text x="599" y="274" fill="#30b030">TO MEASURE C DIMENSION</text>
 <text transform="translate(650.5 273) rotate(-90)">DATUM 'D'</text>
 <text transform="translate(665.5 273) rotate(-90)">DATUM 'D'</text>
 <text transform="translate(590.8 396) rotate(-90)">DATUM 'F'</text>
</g>
<g fill="none" stroke="#a8a040" stroke-width="0.4">
 <circle cx="566.5" cy="256.8" r="1.3"/>
 <circle cx="655" cy="278" r="1.2"/>
 <circle cx="662" cy="321" r="1.2"/>
 <circle cx="627.5" cy="387.5" r="1.3"/>
 <circle cx="701.5" cy="300.2" r="1.3"/>
 <circle cx="479" cy="338" r="1.2"/>
 <circle cx="499" cy="294.5" r="1.2"/>
 <circle cx="499" cy="380" r="1.2"/>
 <circle cx="725" cy="339" r="1.2"/>
</g>
</svg>

</body></html>
